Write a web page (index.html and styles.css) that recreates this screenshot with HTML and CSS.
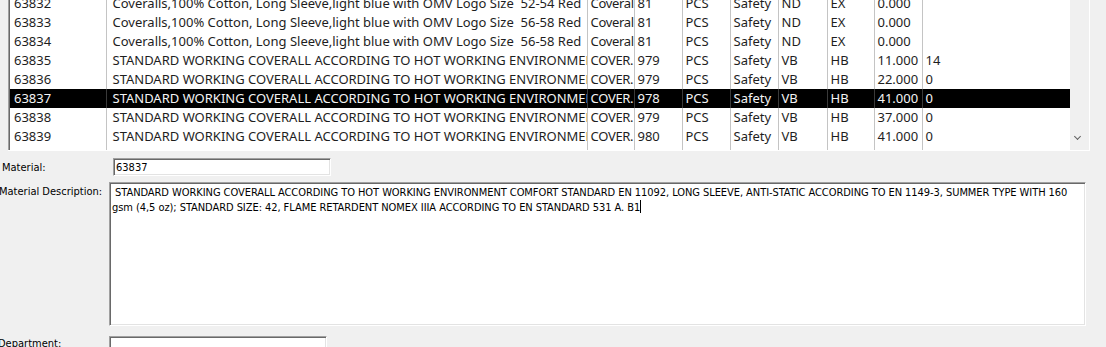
FILE: index.html
```html
<!DOCTYPE html>
<html lang="en">
<head>
  <meta charset="UTF-8">
  <title>Material Lookup</title>
  <link rel="stylesheet" href="styles.css">
</head>
<body>

  <div class="grid-wrap">
    <div class="grid-body">
      <table class="grid">
        <colgroup>
          <col class="c1"><col class="c2"><col class="c3"><col class="c4"><col class="c5">
          <col class="c6"><col class="c7"><col class="c8"><col class="c9"><col class="c10">
        </colgroup>
        <tbody id="rows"></tbody>
      </table>
    </div>
    <div class="scrollbar">
      <span class="chevron"></span>
    </div>
  </div>

  <div class="form">
    <div class="field">
      <label class="lbl lbl-material">Material:</label>
      <div class="input input-material">63837</div>
    </div>
    <div class="field field-top">
      <label class="lbl lbl-desc">Material Description:</label>
      <div class="memo"> STANDARD WORKING COVERALL ACCORDING TO HOT WORKING ENVIRONMENT COMFORT STANDARD EN 11092, LONG SLEEVE, ANTI-STATIC ACCORDING TO EN 1149-3, SUMMER TYPE WITH 160
gsm (4,5 oz); STANDARD SIZE: 42, FLAME RETARDENT NOMEX IIIA ACCORDING TO EN STANDARD 531 A. B1<span class="caret"></span></div>
    </div>
    <div class="field">
      <label class="lbl lbl-dept">Department:</label>
      <div class="input input-dept"></div>
    </div>
  </div>

  <script>
    const cotton = 'Coveralls,100% Cotton, Long Sleeve,light blue with OMV Logo Size ';
    const standard = 'STANDARD WORKING COVERALL ACCORDING TO HOT WORKING ENVIRONMENT COMFORT STANDARD';

    const rows = [
      ['63832', cotton + ' 52-54 Red', 'Coveralls', '81', 'PCS', 'Safety', 'ND', 'EX', '0.000', ''],
      ['63833', cotton + ' 56-58 Red', 'Coveralls', '81', 'PCS', 'Safety', 'ND', 'EX', '0.000', ''],
      ['63834', cotton + ' 56-58 Red', 'Coveralls', '81', 'PCS', 'Safety', 'ND', 'EX', '0.000', ''],
      ['63835', standard, 'COVER.', '979', 'PCS', 'Safety', 'VB', 'HB', '11.000', '14'],
      ['63836', standard, 'COVER.', '979', 'PCS', 'Safety', 'VB', 'HB', '22.000', '0'],
      ['63837', standard, 'COVER.', '978', 'PCS', 'Safety', 'VB', 'HB', '41.000', '0', true],
      ['63838', standard, 'COVER.', '979', 'PCS', 'Safety', 'VB', 'HB', '37.000', '0'],
      ['63839', standard, 'COVER.', '980', 'PCS', 'Safety', 'VB', 'HB', '41.000', '0'],
      ['', '', '', '', '', '', '', '', '', '']
    ];

    const body = document.getElementById('rows');
    rows.forEach(r => {
      const tr = document.createElement('tr');
      if (r[10]) tr.className = 'selected';
      for (let i = 0; i < 10; i++) {
        const td = document.createElement('td');
        td.textContent = r[i];
        tr.appendChild(td);
      }
      body.appendChild(tr);
    });
  </script>

</body>
</html>
```

FILE: styles.css
```css
body {
  margin: 0;
  padding: 0;
  background: #f0f0f0;
  color: #000;
  overflow: hidden;
  width: 1106px;
  height: 347px;
}

.grid-wrap {
  display: flex;
  margin-left: 8px;
  width: 1081px;
  height: 150px;
  border-bottom: 1px solid #fff;
  border-right: 1px solid #fff;
}

.grid-body {
  width: 1060px;
  height: 150px;
  overflow: hidden;
  background: #fff;
  border-left: 1px solid #a0a0a0;
  box-shadow: inset 1px 0 0 #696969;
  padding-left: 1px;
}

.grid {
  table-layout: fixed;
  border-collapse: collapse;
  width: 1060px;
  margin-top: -6px;
  font-family: "Noto Sans", "Open Sans", sans-serif;
  font-size: 13px;
}

.c1 { width: 96px; }
.c2 { width: 481px; }
.c3 { width: 47px; }
.c4 { width: 48px; }
.c5 { width: 48px; }
.c6 { width: 48px; }
.c7 { width: 49px; }
.c8 { width: 47px; }
.c9 { width: 48px; }
.c10 { width: 148px; }

.grid td {
  height: 19px;
  line-height: 19px;
  padding: 0 0 0 3px;
  white-space: pre;
  overflow: hidden;
  text-overflow: clip;
  border-left: 1px solid #c4c4c4;
  color: #1e1e1e;
}

.grid td:first-child {
  border-left: none;
  padding-left: 4px;
}

.grid td:nth-child(2) {
  padding-left: 6px;
}

.grid td:nth-child(3) {
  letter-spacing: -0.3px;
}

.grid tr.selected td {
  background: #000;
  color: #f4f4f4;
  border-left-color: #3a3a3a;
}

.scrollbar {
  width: 18px;
  height: 150px;
  background: #f0f0f0;
  position: relative;
}

.chevron {
  position: absolute;
  left: 5px;
  bottom: 11px;
  width: 4px;
  height: 4px;
  border-right: 1.5px solid #606060;
  border-bottom: 1.5px solid #606060;
  transform: rotate(45deg);
}

.form {
  display: flex;
  flex-direction: column;
  font-family: "DejaVu Sans Condensed", "DejaVu Sans", sans-serif;
  font-stretch: condensed;
  font-size: 11px;
  padding-top: 7px;
}

.field {
  display: flex;
  align-items: center;
}

.field-top {
  align-items: flex-start;
  margin-top: 6px;
}

.lbl {
  width: 109px;
  flex: none;
  white-space: nowrap;
}

.lbl-material {
  padding-left: 2px;
  width: 111px;
}

.lbl-desc {
  margin-left: -1px;
  width: 110px;
  padding-top: 3px;
}

.lbl-dept {
  margin-left: -2px;
  width: 111px;
  padding-top: 6px;
}

.input {
  height: 16px;
  background: #fff;
  border-top: 1px solid #a0a0a0;
  border-left: 1px solid #a0a0a0;
  border-right: 1px solid #fff;
  border-bottom: 1px solid #fff;
  box-shadow: inset 1px 1px 0 #696969, inset -1px -1px 0 #e3e3e3;
  box-sizing: content-box;
  line-height: 17px;
  padding-left: 2px;
}

.input-material {
  width: 214px;
}

.input-dept {
  width: 214px;
  margin-top: 10px;
}

.memo {
  width: 973px;
  height: 139px;
  background: #fff;
  border-top: 1px solid #a0a0a0;
  border-left: 1px solid #a0a0a0;
  border-right: 1px solid #fff;
  border-bottom: 1px solid #fff;
  box-shadow: inset 1px 1px 0 #696969, inset -1px -1px 0 #e3e3e3;
  padding: 3px 0 0 2px;
  line-height: 14px;
  letter-spacing: -0.06px;
  white-space: pre;
  overflow: hidden;
}

.caret {
  display: inline-block;
  width: 1px;
  height: 13px;
  background: #000;
  vertical-align: -2px;
}
```
